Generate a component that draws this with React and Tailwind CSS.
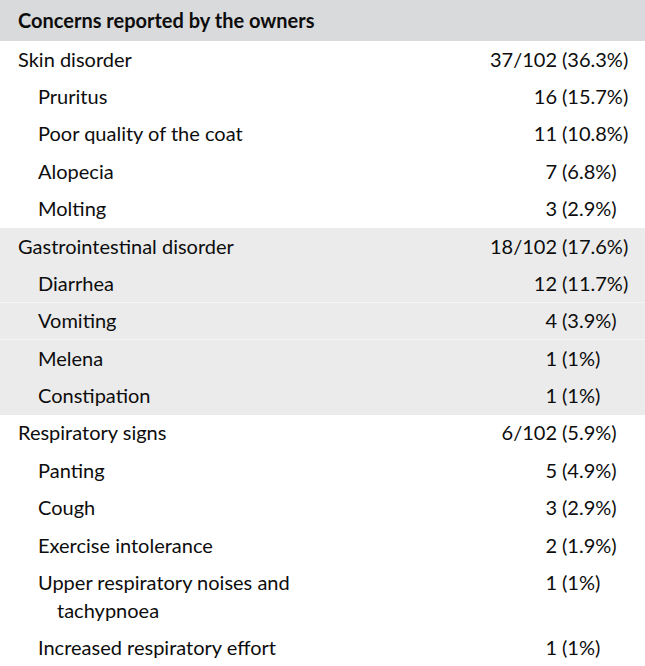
import React from "react";

const groups = [
  {
    label: "Skin disorder",
    value: ["37/102", "(36.3%)"],
    shaded: false,
    items: [
      { label: "Pruritus", value: ["16", "(15.7%)"] },
      { label: "Poor quality of the coat", value: ["11", "(10.8%)"] },
      { label: "Alopecia", value: ["7", "(6.8%)"] },
      { label: "Molting", value: ["3", "(2.9%)"] },
    ],
  },
  {
    label: "Gastrointestinal disorder",
    value: ["18/102", "(17.6%)"],
    shaded: true,
    items: [
      { label: "Diarrhea", value: ["12", "(11.7%)"] },
      { label: "Vomiting", value: ["4", "(3.9%)"], line: true },
      { label: "Melena", value: ["1", "(1%)"], line: true },
      { label: "Constipation", value: ["1", "(1%)"] },
    ],
  },
  {
    label: "Respiratory signs",
    value: ["6/102", "(5.9%)"],
    shaded: false,
    items: [
      { label: "Panting", value: ["5", "(4.9%)"] },
      { label: "Cough", value: ["3", "(2.9%)"] },
      { label: "Exercise intolerance", value: ["2", "(1.9%)"] },
      { label: "Upper respiratory noises and tachypnoea", value: ["1", "(1%)"] },
      { label: "Increased respiratory effort", value: ["1", "(1%)"] },
    ],
  },
];

// numbers line up on the opening bracket
const Value = ({ value }) => (
  <div className="flex shrink-0">
    <span className="w-[98px] text-right">{value[0]}</span>
    <span className="w-[88px] pl-[5px]">{value[1]}</span>
  </div>
);

const Row = ({ label, value, sub, line }) => (
  <div
    className={`flex items-start pt-[3.7px] pb-[5.7px] leading-[28px] ${
      line ? "border-t border-[#f4f4f4] -mt-px" : ""
    }`}
  >
    <div
      className={`flex-1 ${
        sub ? "pl-[57px] -indent-[19px] pr-[150px]" : "pl-[18px]"
      }`}
    >
      {label}
    </div>
    <Value value={value} />
  </div>
);

export default function App() {
  return (
    <div
      className="w-[645px] bg-white text-[20px] text-[#0d0d0d]"
      style={{ fontFamily: "Lato, 'Open Sans', sans-serif" }}
    >
      <div className="bg-[#d9dadb] pl-[18px] pt-[5.5px] pb-[7.5px] leading-[28px] font-bold">
        Concerns reported by the owners
      </div>
      {groups.map((g) => (
        <div key={g.label} className={g.shaded ? "bg-[#ebebeb]" : ""}>
          <Row label={g.label} value={g.value} />
          {g.items.map((it) => (
            <Row key={it.label} label={it.label} value={it.value} sub line={it.line} />
          ))}
        </div>
      ))}
    </div>
  );
}
